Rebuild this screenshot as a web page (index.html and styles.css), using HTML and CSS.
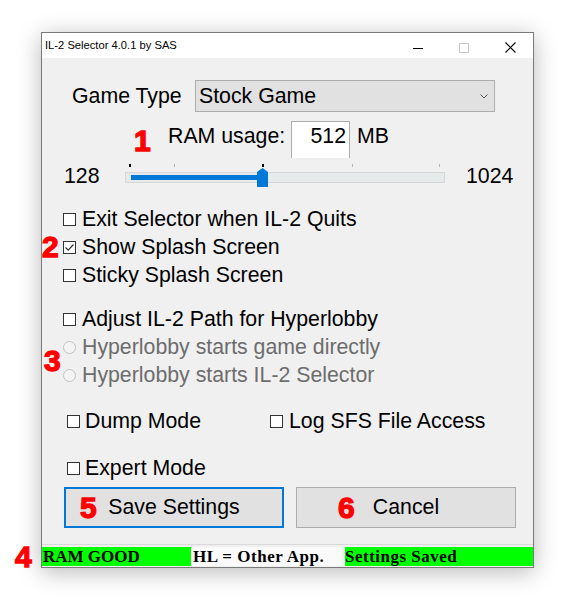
FILE: index.html
```html
<!DOCTYPE html>
<html>
<head>
<meta charset="utf-8">
<title>IL-2 Selector</title>
<link rel="stylesheet" href="styles.css">
</head>
<body>
<div class="page">
  <div class="window">
    <div class="titlebar">
      <span class="title">IL-2 Selector 4.0.1 by SAS</span>
      <div class="caption-buttons">
        <span class="cap-btn"><svg width="10" height="10" viewBox="0 0 10 10"><line x1="0" y1="5.5" x2="10" y2="5.5" stroke="#000" stroke-width="1"/></svg></span>
        <span class="cap-btn"><svg width="10" height="10" viewBox="0 0 10 10"><rect x="0.5" y="0.5" width="9" height="9" fill="none" stroke="#cccccc" stroke-width="1"/></svg></span>
        <span class="cap-btn"><svg width="11" height="11" viewBox="0 0 11 11"><path d="M0.5 0.5 L10.5 10.5 M10.5 0.5 L0.5 10.5" stroke="#000" stroke-width="1.1" fill="none"/></svg></span>
      </div>
    </div>

    <div class="client">
      <div class="row-game">
        <span class="lbl-game">Game Type</span>
        <div class="combo">
          <span>Stock Game</span>
          <svg class="chev" width="8" height="5" viewBox="0 0 8 5"><path d="M0.5 0.5 L4 4 L7.5 0.5" fill="none" stroke="#555" stroke-width="1"/></svg>
        </div>
      </div>

      <div class="row-ram">
        <span class="lbl-ram">RAM usage:</span>
        <div class="numbox">512</div>
        <span class="lbl-mb">MB</span>
      </div>

      <div class="row-slider">
        <span class="lbl-min">128</span>
        <div class="slider">
          <span class="tick tick-dark" style="left:4px"></span>
          <span class="tick" style="left:49px"></span>
          <span class="tick tick-dark" style="left:137px"></span>
          <span class="tick" style="left:227px"></span>
          <span class="tick" style="left:314px"></span>
          <div class="track"><div class="fill" style="width:131px"></div></div>
          <svg class="thumb" width="11" height="19" viewBox="0 0 11 19"><path d="M0 4 L5.5 0 L11 4 L11 19 L0 19 Z" fill="#0078d7"/></svg>
        </div>
        <span class="lbl-max">1024</span>
      </div>

      <div class="group g1">
        <div class="opt"><span class="cb"></span><span>Exit Selector when IL-2 Quits</span></div>
        <div class="opt"><span class="cb"><svg width="11" height="11" viewBox="0 0 11 11"><path d="M1.5 5.5 L4.2 8.2 L9.5 2.5" fill="none" stroke="#333" stroke-width="1.2"/></svg></span><span>Show Splash Screen</span></div>
        <div class="opt"><span class="cb"></span><span>Sticky Splash Screen</span></div>
      </div>

      <div class="group g2">
        <div class="opt"><span class="cb"></span><span>Adjust IL-2 Path for Hyperlobby</span></div>
        <div class="opt disabled"><span class="rb"></span><span>Hyperlobby starts game directly</span></div>
        <div class="opt disabled"><span class="rb"></span><span>Hyperlobby starts IL-2 Selector</span></div>
      </div>

      <div class="row-dump">
        <div class="opt opt-wide"><span class="cb"></span><span>Dump Mode</span></div>
        <div class="opt opt-log"><span class="cb"></span><span>Log SFS File Access</span></div>
      </div>

      <div class="row-expert">
        <div class="opt opt-wide"><span class="cb"></span><span>Expert Mode</span></div>
      </div>

      <div class="row-buttons">
        <button class="btn btn-default">Save Settings</button>
        <button class="btn">Cancel</button>
      </div>
    </div>

    <div class="statusbar">
      <span class="panel panel-ram">RAM GOOD</span>
      <span class="panel panel-hl">HL = Other App.</span>
      <span class="panel panel-saved">Settings Saved</span>
    </div>
  </div>

  <span class="mark m1">1</span>
  <span class="mark m2">2</span>
  <span class="mark m3">3</span>
  <span class="mark m4">4</span>
  <span class="mark m5">5</span>
  <span class="mark m6">6</span>
</div>
</body>
</html>
```

FILE: styles.css
```css
html, body {
  margin: 0;
  padding: 0;
  background: #ffffff;
}

body {
  font-family: "Liberation Sans", Arial, sans-serif;
  color: #000;
}

.page {
  position: relative;
  width: 582px;
  height: 610px;
  padding: 32px 0 0 41px;
  box-sizing: border-box;
}

.window {
  width: 493px;
  height: 536px;
  box-sizing: border-box;
  border: 1px solid #7a7a7a;
  background: #f0f0f0;
  box-shadow: 0 4px 22px rgba(0, 0, 0, 0.28);
  display: flex;
  flex-direction: column;
}

/* title bar */
.titlebar {
  height: 25px;
  flex: none;
  background: #ffffff;
  display: flex;
  align-items: center;
}

.title {
  padding-left: 3px;
  font-size: 11.2px;
  line-height: 25px;
  color: #000;
}

.caption-buttons {
  margin-left: auto;
  display: flex;
  height: 25px;
}

.cap-btn {
  width: 46px;
  height: 25px;
  display: flex;
  align-items: center;
  justify-content: center;
  padding-top: 4px;
  box-sizing: border-box;
}

/* client area */
.client {
  flex: 1;
  display: flex;
  flex-direction: column;
  font-size: 21.3px;
  line-height: 24px;
}

.row-game {
  margin-top: 22px;
  height: 32px;
  display: flex;
  align-items: center;
  padding-left: 30px;
}

.lbl-game {
  width: 123px;
  flex: none;
}

.combo {
  width: 300px;
  height: 32px;
  box-sizing: border-box;
  border: 1px solid #adadad;
  background: #e1e1e1;
  display: flex;
  align-items: center;
  justify-content: space-between;
  padding: 0 6px 0 3px;
}

.chev {
  display: block;
}

.row-ram {
  margin-top: 9px;
  height: 37px;
  display: flex;
  align-items: baseline;
  padding-left: 126px;
}

.lbl-ram {
  width: 123px;
  flex: none;
}

.numbox {
  width: 59px;
  height: 37px;
  box-sizing: border-box;
  border: 1px solid #adadad;
  border-bottom: none;
  background: #ffffff;
  text-align: right;
  padding: 2px 3px 0 0;
}

.lbl-mb {
  margin-left: 7px;
}

.row-slider {
  margin-top: 6px;
  height: 23px;
  display: flex;
  align-items: flex-start;
  padding-left: 22px;
}

.lbl-min {
  width: 61px;
  flex: none;
}

.slider {
  position: relative;
  width: 320px;
  height: 23px;
  flex: none;
}

.tick {
  position: absolute;
  top: 0;
  width: 1px;
  height: 3px;
  background: #b4b4b4;
}

.tick-dark {
  width: 2px;
  background: #000;
}

.track {
  margin-top: 8px;
  height: 11px;
  box-sizing: border-box;
  border: 1px solid #d6d6d6;
  background: #e7eaea;
  padding: 2px 0 0 5px;
}

.fill {
  height: 5px;
  background: #0078d7;
}

.thumb {
  position: absolute;
  left: 132px;
  top: 4px;
  display: block;
}

.lbl-max {
  margin-left: 21px;
}

/* option groups */
.group {
  display: flex;
  flex-direction: column;
  padding-left: 21px;
}

.g1 {
  margin-top: 18px;
}

.g2 {
  margin-top: 16px;
}

.opt {
  height: 28px;
  line-height: 28px;
  display: flex;
  align-items: center;
  gap: 6px;
  white-space: nowrap;
}

.cb {
  width: 13px;
  height: 13px;
  box-sizing: border-box;
  border: 1px solid #333333;
  background: #ffffff;
  flex: none;
  display: flex;
  align-items: center;
  justify-content: center;
}

.cb svg {
  display: block;
}

.rb {
  width: 13px;
  height: 13px;
  box-sizing: border-box;
  border: 1px solid #c2c2c2;
  border-radius: 50%;
  background: #f4f4f4;
  flex: none;
}

.disabled {
  color: #6d6d6d;
}

.row-dump {
  margin-top: 18px;
  display: flex;
  padding-left: 25px;
}

.opt-wide {
  width: 203px;
  gap: 5px;
}

.opt-log {
  gap: 6px;
}

.row-expert {
  margin-top: 19px;
  display: flex;
  padding-left: 25px;
}

.row-buttons {
  margin-top: 5px;
  display: flex;
  gap: 12px;
  padding-left: 22px;
}

.btn {
  width: 220px;
  height: 41px;
  box-sizing: border-box;
  border: 1px solid #adadad;
  background: #e1e1e1;
  font-family: "Liberation Sans", Arial, sans-serif;
  font-size: 21.3px;
  color: #000;
  padding: 0;
  margin: 0;
}

.btn-default {
  border: 2px solid #0078d7;
}

/* status bar */
.statusbar {
  flex: none;
  height: 23px;
  box-sizing: border-box;
  border-top: 1px solid #d9d9d9;
  padding: 2px 0 1px 0;
  display: flex;
  font-family: "Liberation Serif", "Times New Roman", serif;
  font-weight: bold;
  font-size: 17px;
  line-height: 19px;
}

.panel {
  height: 19px;
  white-space: nowrap;
  overflow: hidden;
}

.panel-ram {
  width: 149px;
  background: #00ff00;
  padding-left: 1px;
  box-sizing: border-box;
}

.panel-hl {
  width: 151px;
  background: #fafafa;
  padding-left: 2px;
  box-sizing: border-box;
  letter-spacing: 0.5px;
}

.panel-saved {
  margin-left: 3px;
  width: 188px;
  background: #00ff00;
  padding-left: 0;
  box-sizing: border-box;
  letter-spacing: 0.5px;
}

/* red annotation markers */
.mark {
  position: absolute;
  font-family: "Liberation Sans", Arial, sans-serif;
  font-weight: bold;
  font-size: 30px;
  line-height: 30px;
  color: #ff0000;
  -webkit-text-stroke: 1.3px #ff0000;
}

.m1 { left: 134px; top: 126px; }
.m2 { left: 42px; top: 232px; }
.m3 { left: 44px; top: 346px; }
.m4 { left: 15px; top: 542px; }
.m5 { left: 80px; top: 493px; }
.m6 { left: 338px; top: 493px; }
```
